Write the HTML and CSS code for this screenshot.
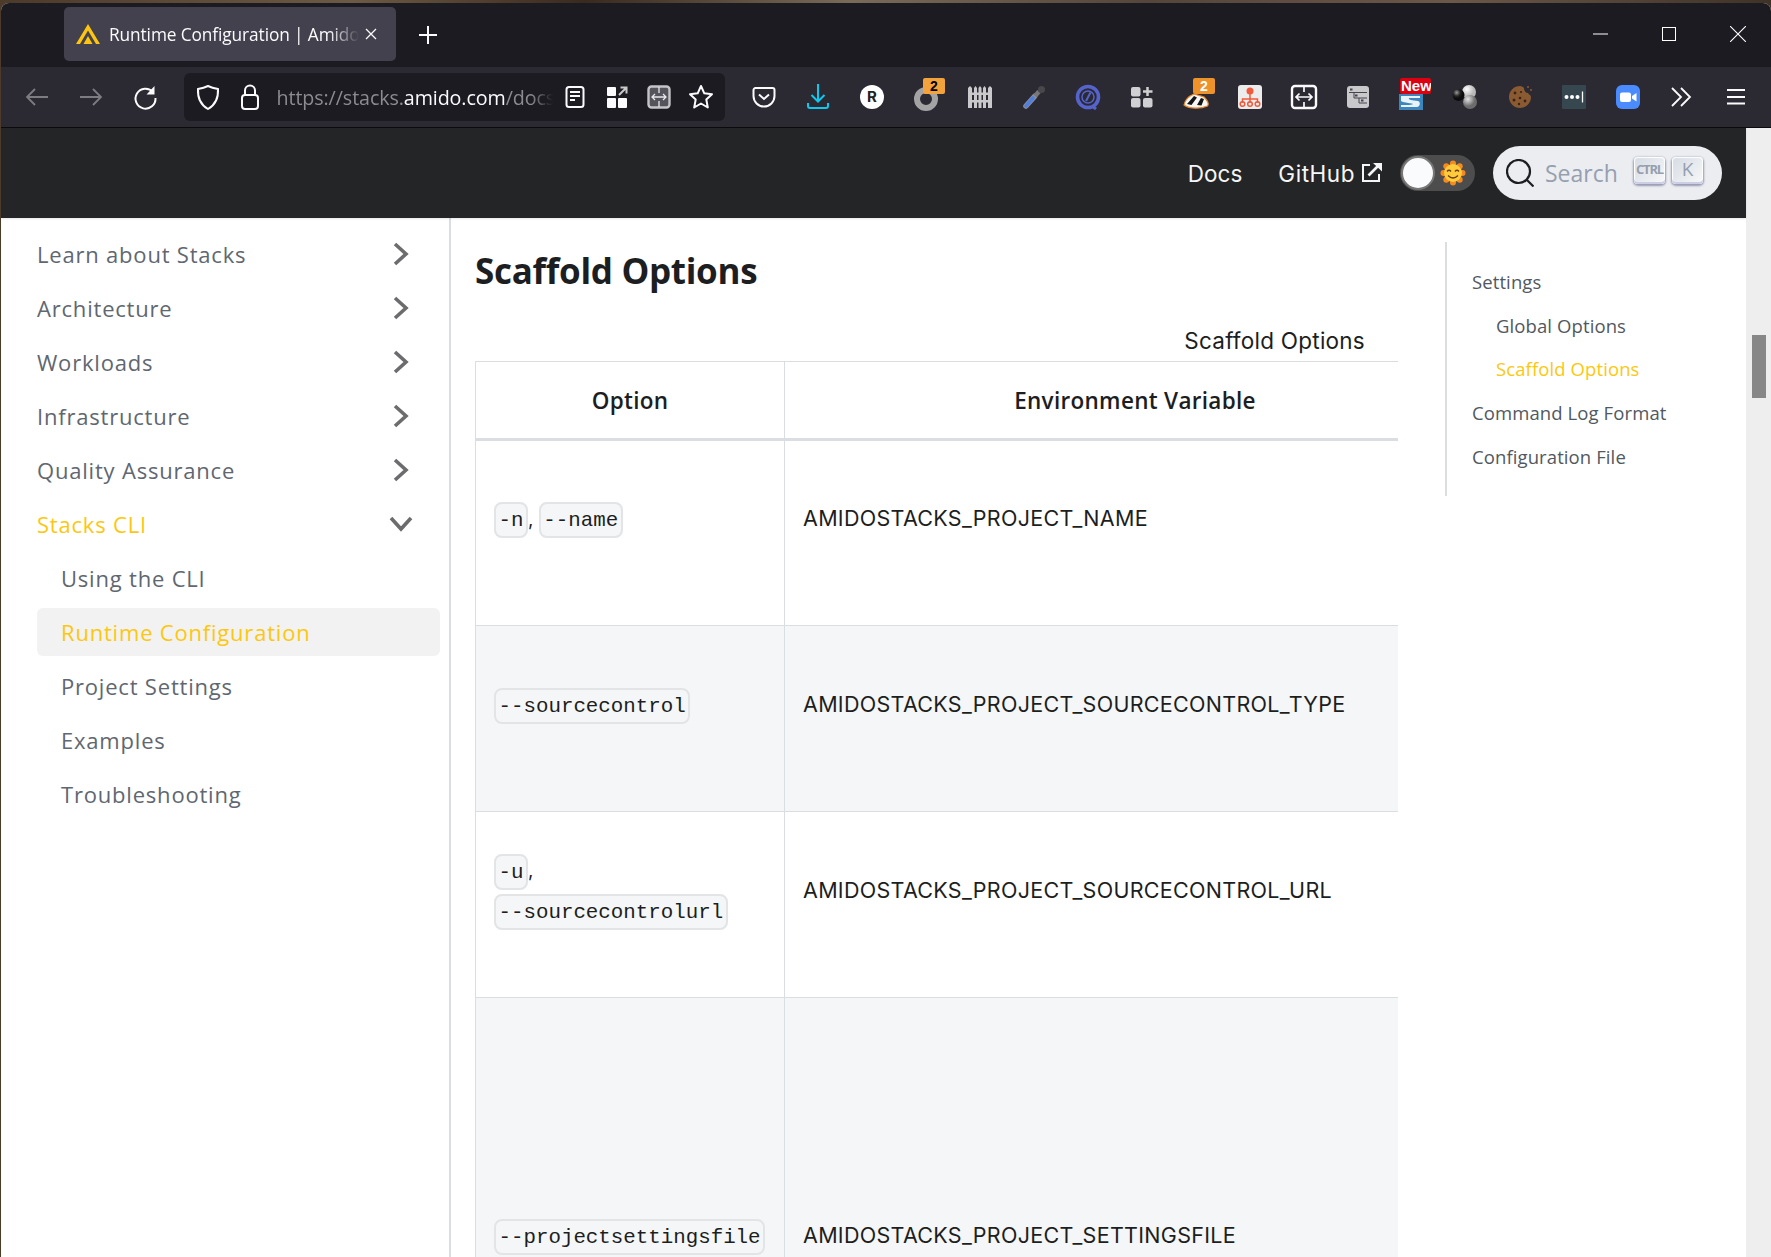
FILE: index.html
```html
<!DOCTYPE html>
<html lang="en">
<head>
<meta charset="utf-8">
<title>Runtime Configuration | Amido Stacks</title>
<link rel="stylesheet" href="styles.css">
</head>
<body>
<div class="window">
  <header class="titlebar">
    <div class="tab">
      <svg class="tab-logo" viewBox="0 0 24 20"><path d="M0 20 L12 0 L24 20 L20 20 L12 6.500 L4 20 Z" fill="#fdc50f"/><path d="M7.500 20 L12 12 L16.500 20 Z" fill="#fdc50f"/></svg>
      <span class="tab-title">Runtime Configuration | Amido</span>
      <svg class="tab-close" viewBox="0 0 12 12"><path d="M1 1 L11 11 M11 1 L1 11" stroke="#fbfbfe" stroke-width="1.300" fill="none"/></svg>
    </div>
    <svg class="new-tab" viewBox="0 0 18 18"><path d="M9 0 V18 M0 9 H18" stroke="#fbfbfe" stroke-width="2" fill="none"/></svg>
    <div class="win-controls">
      <svg class="win-min" viewBox="0 0 15 2"><path d="M0 1 H15" stroke="#fff" stroke-width="1"/></svg>
      <svg class="win-max" viewBox="0 0 14 14"><rect x=".5" y=".5" width="13" height="13" fill="none" stroke="#fff"/></svg>
      <svg class="win-close" viewBox="0 0 16 16"><path d="M0 0 L16 16 M16 0 L0 16" stroke="#fff" stroke-width="1.100" fill="none"/></svg>
    </div>
  </header>

  <div class="toolbar">
    <div class="tb-btn"><svg class="ic" viewBox="0 0 28 28"><path d="M25 14 H4 M12 6 L4 14 L12 22" fill="none" stroke="#7d7c82" stroke-width="1.800"/></svg></div>
    <div class="tb-btn"><svg class="ic" viewBox="0 0 28 28"><path d="M3 14 H24 M16 6 L24 14 L16 22" fill="none" stroke="#7d7c82" stroke-width="1.800"/></svg></div>
    <div class="tb-btn"><svg class="ic" viewBox="0 0 28 28"><path d="M22 9 A10 10 0 1 0 24.500 15" fill="none" stroke="#fbfbfe" stroke-width="2"/><path d="M23.500 3 V11.500 H15.500 Z" fill="#fbfbfe"/></svg></div>

    <div class="urlbar">
      <svg class="url-ic" viewBox="0 0 28 28"><path d="M14 3 C18 5 21 5.500 24 6 C24.500 15 21 22 14 26 C7 22 3.500 15 4 6 C7 5.500 10 5 14 3 Z" fill="none" stroke="#fbfbfe" stroke-width="2"/></svg>
      <svg class="url-ic" viewBox="0 0 28 28"><rect x="6" y="12" width="16" height="14" rx="3" fill="none" stroke="#fbfbfe" stroke-width="2"/><path d="M9 12 V7.500 A5 5 0 0 1 19 7.500 V12" fill="none" stroke="#fbfbfe" stroke-width="2"/></svg>
      <span class="url-text"><span class="url-dim">https://stacks.</span>amido.com<span class="url-dim">/docs</span></span>
      <svg class="url-ic url-end" viewBox="0 0 28 28"><rect x="5.500" y="4" width="17" height="20" rx="2.500" fill="none" stroke="#fbfbfe" stroke-width="2"/><path d="M9 9 H19 M9 13 H19 M9 17 H14" stroke="#fbfbfe" stroke-width="2" fill="none"/></svg>
      <svg class="url-ic" viewBox="0 0 28 28"><rect x="4" y="4" width="9" height="9" rx="1" fill="#fbfbfe"/><rect x="4" y="15" width="9" height="10" rx="1" fill="#fbfbfe"/><rect x="15" y="15" width="9" height="10" rx="1" fill="#fbfbfe"/><path d="M16 12 L23 5 M17.500 4.500 H23.500 V10.500" fill="none" stroke="#c9c9cc" stroke-width="2"/></svg>
      <svg class="url-ic" viewBox="0 0 28 28"><rect x="3.500" y="3.500" width="21" height="21" rx="3" fill="#55545c" stroke="#c4c4c8" stroke-width="2.400"/><path d="M14 4 V10 M14 18 V24 M7 14 H21 M10 11 L7 14 L10 17 M18 11 L21 14 L18 17" fill="none" stroke="#e8e8ea" stroke-width="1.300"/></svg>
      <svg class="url-ic" viewBox="0 0 28 28"><path d="M14 3 L17.300 10.300 L25 11.200 L19.300 16.500 L20.800 24.500 L14 20.500 L7.200 24.500 L8.700 16.500 L3 11.200 L10.700 10.300 Z" fill="none" stroke="#fbfbfe" stroke-width="2" stroke-linejoin="round"/></svg>
    </div>

    <div class="tb-btn"><svg class="ic" viewBox="0 0 28 28"><path d="M5.500 5 H22.500 A2 2 0 0 1 24.500 7 V13 A10.500 10.500 0 0 1 3.500 13 V7 A2 2 0 0 1 5.500 5 Z" fill="none" stroke="#fbfbfe" stroke-width="2"/><path d="M9 11.500 L14 16 L19 11.500" fill="none" stroke="#fbfbfe" stroke-width="2"/></svg></div>
    <div class="tb-btn"><svg class="ic" viewBox="0 0 28 28"><path d="M14 1 V18 M7.500 12 L14 18.500 L20.500 12 M4 20 V23 A2 2 0 0 0 6 25 H22 A2 2 0 0 0 24 23 V20" fill="none" stroke="#0fc8ee" stroke-width="2"/></svg></div>
    <div class="tb-btn"><span class="ic-r">R</span></div>
    <div class="tb-btn"><svg class="ic" viewBox="0 0 28 28"><circle cx="14" cy="16" r="9" fill="none" stroke="#a3a3a3" stroke-width="6"/></svg><span class="badge badge-amber">2</span></div>
    <div class="tb-btn"><svg class="ic" viewBox="0 0 28 28"><path d="M2 5 L4 3 L6 5 V25 H2 Z M8 5 L9.500 3 L11 5 V25 H8 Z M12.500 5 L14 3 L15.500 5 V25 H12.500 Z M17 5 L18.500 3 L20 5 V25 H17 Z M22 5 L24 3 L26 5 V25 H22 Z M2 9.500 H26 V12 H2 Z M2 17 H26 V19.500 H2 Z" fill="#c9c9cb"/></svg></div>
    <div class="tb-btn"><svg class="ic" viewBox="0 0 28 28"><path d="M6 23 L14.500 13.500" stroke="#8f8f95" stroke-width="5.500" stroke-linecap="round"/><path d="M6 23 L13 15" stroke="#4f7fe0" stroke-width="3.600" stroke-linecap="round"/><path d="M15 13 L19 8.500" stroke="#77777c" stroke-width="4.500"/><circle cx="21.500" cy="6.500" r="3.500" fill="#47474c"/></svg></div>
    <div class="tb-btn"><svg class="ic" viewBox="0 0 28 28"><circle cx="14" cy="14" r="10.500" fill="none" stroke="#5563cc" stroke-width="3.600"/><path d="M18 23 L22 26" stroke="#5563cc" stroke-width="3"/><circle cx="14" cy="14" r="6" fill="none" stroke="#5563cc" stroke-width="1.500"/><path d="M12 18 L16.500 9.500" stroke="#5563cc" stroke-width="2"/></svg></div>
    <div class="tb-btn"><svg class="ic" viewBox="0 0 28 28"><rect x="3" y="4" width="9.500" height="9.500" rx="2" fill="#d0d0d2"/><rect x="3" y="15" width="9.500" height="9.500" rx="2" fill="#d0d0d2"/><rect x="15" y="15" width="9.500" height="9.500" rx="2" fill="#d0d0d2"/><path d="M19.500 4 V13 M15 8.500 H24.500" stroke="#d0d0d2" stroke-width="2.500"/></svg></div>
    <div class="tb-btn"><svg class="ic" viewBox="0 0 28 28"><path d="M2 22 C3 17 7 13 12 11 L22 14 C26 18 27 21 25.500 23 C20 25.500 8 26.500 2 22 Z" fill="#f7f7f7" stroke="#e8862a" stroke-width="1.200"/><path d="M5 21 L12 13 L15 14.500 L9.500 22 Z M15 22 L19 15 L22 16 L19.500 22.500 Z" fill="#161616"/></svg><span class="badge badge-orange">2</span></div>
    <div class="tb-btn"><svg class="ic" viewBox="0 0 28 28"><rect x="2" y="2" width="24" height="24" rx="3" fill="#ececec"/><circle cx="14" cy="8" r="3.500" fill="#ef5b3c"/><path d="M14 11 V16 M6.500 20 V16 H21.500 V20 M14 16 V20" fill="none" stroke="#ef5b3c" stroke-width="1.500"/><circle cx="6.500" cy="21" r="2.300" fill="none" stroke="#ef5b3c" stroke-width="1.500"/><circle cx="14" cy="21" r="2.300" fill="none" stroke="#ef5b3c" stroke-width="1.500"/><circle cx="21.500" cy="21" r="2.300" fill="none" stroke="#ef5b3c" stroke-width="1.500"/></svg></div>
    <div class="tb-btn"><svg class="ic" viewBox="0 0 28 28"><rect x="2" y="3" width="24" height="22" rx="3" fill="none" stroke="#fbfbfe" stroke-width="2.400"/><path d="M14 3 V9 M14 19 V25 M6 14 H22 M9.500 10.500 L6 14 L9.500 17.500 M18.500 10.500 L22 14 L18.500 17.500" fill="none" stroke="#fbfbfe" stroke-width="1.700"/></svg></div>
    <div class="tb-btn"><svg class="ic" viewBox="0 0 28 28"><rect x="3" y="3" width="22" height="22" rx="3" fill="#c9c9cb"/><path d="M5 9.500 H23 M10 15 H23 M15 20 H23 M10 9.500 V15 M15 15 V20" stroke="#45454b" stroke-width="1"/><rect x="6" y="5.500" width="2.500" height="2" fill="#45454b"/><rect x="11" y="11.500" width="2.500" height="2" fill="#45454b"/><rect x="17" y="16.500" width="2.500" height="2" fill="#45454b"/></svg></div>
    <div class="tb-btn"><svg class="ic" viewBox="0 0 28 28"><rect x="1" y="11" width="24" height="16" fill="#3d86bd"/><path d="M3 13 H22 V15 H11 C10 17 14 17 20 18 C23 19 22 24 19 24 H3 V22 C9 22 15 22 15 21 C15 20 6 20 3 18 Z" fill="#e9f3fa"/></svg><span class="badge badge-new">New</span></div>
    <div class="tb-btn"><svg class="ic" viewBox="0 0 28 28"><defs><radialGradient id="ball-light" cx=".35" cy=".3"><stop offset="0" stop-color="#fff"/><stop offset="1" stop-color="#b9b9b9"/></radialGradient><radialGradient id="ball-grey" cx=".35" cy=".3"><stop offset="0" stop-color="#e4e4e4"/><stop offset="1" stop-color="#6c6c6c"/></radialGradient><radialGradient id="ball-dark" cx=".35" cy=".3"><stop offset="0" stop-color="#9a9a9a"/><stop offset=".6" stop-color="#232323"/><stop offset="1" stop-color="#0c0c0c"/></radialGradient></defs><circle cx="17" cy="9" r="7" fill="url(#ball-light)"/><circle cx="18" cy="19" r="7" fill="url(#ball-grey)"/><circle cx="6.500" cy="12" r="6" fill="url(#ball-dark)"/></svg></div>
    <div class="tb-btn"><svg class="ic" viewBox="0 0 28 28"><path d="M14 3 C16 3 17 4 18 5 C18 8 20 10 22 10 C23 12 25 12 25 14 A11 11 0 1 1 14 3 Z" fill="#8a5a33"/><g fill="#3d2412"><circle cx="9" cy="10" r="1.400"/><circle cx="15" cy="9" r="1.100"/><circle cx="8" cy="17" r="1.500"/><circle cx="14" cy="15" r="1.300"/><circle cx="19" cy="18" r="1.400"/><circle cx="13" cy="21" r="1.200"/></g><g fill="#8a5a33"><circle cx="22" cy="4" r="1"/><circle cx="25" cy="7" r="1"/></g></svg></div>
    <div class="tb-btn"><svg class="ic" viewBox="0 0 28 28"><rect x="2" y="2" width="24" height="24" rx="1" fill="#37474f"/><circle cx="6.500" cy="14" r="2" fill="#fff"/><circle cx="12" cy="14" r="2" fill="#fff"/><circle cx="17.500" cy="14" r="2" fill="#fff"/><path d="M22.500 8.500 V19.500" stroke="#fff" stroke-width="1.300"/></svg></div>
    <div class="tb-btn"><svg class="ic" viewBox="0 0 28 28"><rect x="2" y="2" width="24" height="24" rx="6" fill="#4a8cff"/><rect x="6" y="9.500" width="11" height="9.500" rx="2" fill="#fff"/><path d="M18 13 L22.500 10 V18.500 L18 15.500 Z" fill="#fff"/></svg></div>
    <div class="tb-btn"><svg class="ic" viewBox="0 0 28 28"><path d="M4 5 L13 14 L4 23 M13 5 L22 14 L13 23" fill="none" stroke="#fbfbfe" stroke-width="1.800"/></svg></div>
    <div class="tb-btn"><svg class="ic" viewBox="0 0 28 28"><path d="M5 7 H23 M5 14 H23 M5 20.500 H23" stroke="#fbfbfe" stroke-width="2"/></svg></div>
  </div>

  <div class="viewport">
    <div class="page">
      <nav class="navbar">
        <a class="nav-link">Docs</a>
        <a class="nav-link nav-github">GitHub
          <svg class="ext" viewBox="0 0 20 20"><path d="M8 3 H1 V19 H17 V12" fill="none" stroke="#f5f6f7" stroke-width="2"/><path d="M6.500 13.500 L16.500 3.500" stroke="#f5f6f7" stroke-width="2.600"/><path d="M11 1 H20 V9.500 Z" fill="#f5f6f7"/></svg>
        </a>
        <div class="toggle">
          <span class="knob"></span>
          <svg class="sun" viewBox="0 0 26 26"><g fill="#f58a1f"><circle cx="13" cy="3.500" r="3"/><circle cx="13" cy="22.500" r="3"/><circle cx="3.500" cy="13" r="3"/><circle cx="22.500" cy="13" r="3"/><circle cx="6.300" cy="6.300" r="3"/><circle cx="19.700" cy="6.300" r="3"/><circle cx="6.300" cy="19.700" r="3"/><circle cx="19.700" cy="19.700" r="3"/></g><circle cx="13" cy="13" r="9" fill="#fdcb3c"/><path d="M7 11.500 Q9 9 11 11.500 M15 11.500 Q17 9 19 11.500 M8 15.500 Q13 20.500 18 15.500" fill="none" stroke="#6b3f10" stroke-width="1.300"/></svg>
        </div>
        <div class="search">
          <svg class="search-ic" viewBox="0 0 28 28"><circle cx="12.500" cy="12.500" r="11.500" fill="none" stroke="#1c1e21" stroke-width="2.200"/><path d="M21 21 L27.500 27.500" stroke="#1c1e21" stroke-width="2.200"/></svg>
          <span class="search-text">Search</span>
          <kbd class="key key-ctrl">CTRL</kbd>
          <kbd class="key key-k">K</kbd>
        </div>
      </nav>

      <div class="docs">
        <aside class="sidebar">
          <ul class="menu">
            <li class="menu-item"><span>Learn about Stacks</span><svg class="chev" viewBox="0 0 16 24"><path d="M2 2 L13 12 L2 22" fill="none" stroke="#6c6c6e" stroke-width="3.600"/></svg></li>
            <li class="menu-item"><span>Architecture</span><svg class="chev" viewBox="0 0 16 24"><path d="M2 2 L13 12 L2 22" fill="none" stroke="#6c6c6e" stroke-width="3.600"/></svg></li>
            <li class="menu-item"><span>Workloads</span><svg class="chev" viewBox="0 0 16 24"><path d="M2 2 L13 12 L2 22" fill="none" stroke="#6c6c6e" stroke-width="3.600"/></svg></li>
            <li class="menu-item"><span>Infrastructure</span><svg class="chev" viewBox="0 0 16 24"><path d="M2 2 L13 12 L2 22" fill="none" stroke="#6c6c6e" stroke-width="3.600"/></svg></li>
            <li class="menu-item"><span>Quality Assurance</span><svg class="chev" viewBox="0 0 16 24"><path d="M2 2 L13 12 L2 22" fill="none" stroke="#6c6c6e" stroke-width="3.600"/></svg></li>
            <li class="menu-item is-open"><span>Stacks CLI</span><svg class="chev-down" viewBox="0 0 24 16"><path d="M2 2 L12 13 L22 2" fill="none" stroke="#6c6c6e" stroke-width="3.600"/></svg></li>
            <li class="menu-item sub">Using the CLI</li>
            <li class="menu-item sub is-active">Runtime Configuration</li>
            <li class="menu-item sub">Project Settings</li>
            <li class="menu-item sub">Examples</li>
            <li class="menu-item sub">Troubleshooting</li>
          </ul>
        </aside>

        <main class="main">
          <h3 class="heading">Scaffold Options</h3>
          <div class="caption">Scaffold Options</div>
          <div class="table-wrap">
            <table class="options">
              <colgroup><col class="col-option"><col class="col-env"></colgroup>
              <thead>
                <tr><th>Option</th><th>Environment Variable</th></tr>
              </thead>
              <tbody>
                <tr>
                  <td class="cell-option"><code>-n</code>, <code>--name</code></td>
                  <td class="cell-env">AMIDOSTACKS_PROJECT_NAME</td>
                </tr>
                <tr class="alt">
                  <td class="cell-option"><code>--sourcecontrol</code></td>
                  <td class="cell-env">AMIDOSTACKS_PROJECT_SOURCECONTROL_TYPE</td>
                </tr>
                <tr>
                  <td class="cell-option"><code>-u</code>,<br><code>--sourcecontrolurl</code></td>
                  <td class="cell-env">AMIDOSTACKS_PROJECT_SOURCECONTROL_URL</td>
                </tr>
                <tr class="alt tall">
                  <td class="cell-option"><code>--projectsettingsfile</code></td>
                  <td class="cell-env">AMIDOSTACKS_PROJECT_SETTINGSFILE</td>
                </tr>
              </tbody>
            </table>
          </div>
        </main>

        <aside class="toc">
          <ul class="toc-list">
            <li>Settings</li>
            <li class="toc-sub">Global Options</li>
            <li class="toc-sub toc-active">Scaffold Options</li>
            <li>Command Log Format</li>
            <li>Configuration File</li>
          </ul>
        </aside>
      </div>
    </div>
    <div class="scrollbar"><div class="thumb"></div></div>
  </div>
</div>
</body>
</html>
```

FILE: styles.css
```css
* { box-sizing: border-box; }
html, body { height: 100%; }
body {
  margin: 0;
  overflow: hidden;
  background: linear-gradient(90deg, #4c3a2a 0, #6d5a44 20%, #3a2a1e 33%, #7a6a58 48%, #55453a 65%, #6a5848 82%, #3f3227 100%);
  font-family: "Inter", "Liberation Sans", sans-serif;
}
ul { list-style: none; margin: 0; padding: 0; }

.window {
  height: 1254px;
  margin: 3px 0 0 1px;
  border-radius: 8px 8px 0 0;
  overflow: hidden;
  display: flex;
  flex-direction: column;
  background: #fff;
}

/* title bar */
.titlebar {
  flex: 0 0 64px;
  display: flex;
  align-items: flex-start;
  background: #1c1b22;
  padding: 4px 0 0 63px;
}
.tab {
  width: 332px;
  height: 54px;
  border-radius: 5px;
  background: #42414d;
  display: flex;
  align-items: center;
  padding-left: 12px;
}
.tab-logo { width: 24px; height: 20px; flex: none; }
.tab-title {
  margin-left: 9px;
  width: 250px;
  overflow: hidden;
  white-space: nowrap;
  font: 17.300px "Open Sans", sans-serif;
  letter-spacing: -.1px;
  color: #fbfbfe;
  -webkit-mask-image: linear-gradient(90deg, #000 88%, transparent 100%);
  mask-image: linear-gradient(90deg, #000 88%, transparent 100%);
}
.tab-close { width: 12px; height: 12px; margin-left: 6px; flex: none; }
.new-tab { width: 18px; height: 18px; margin: 19px 0 0 23px; flex: none; }
.win-controls {
  margin-left: auto;
  display: flex;
  align-items: center;
  height: 54px;
}
.win-min { width: 15px; height: 2px; }
.win-max { width: 14px; height: 14px; margin-left: 54px; }
.win-close { width: 16px; height: 16px; margin: 0 25px 0 54px; }

/* toolbar */
.toolbar {
  flex: 0 0 61px;
  display: flex;
  align-items: center;
  background: #2b2a33;
  border-bottom: 1px solid #0c0c0d;
  padding: 0 0 0 9px;
}
.tb-btn {
  position: relative;
  flex: 0 0 54px;
  height: 60px;
  display: flex;
  align-items: center;
  justify-content: center;
}
.ic { width: 28px; height: 28px; display: block; }
.ic-r {
  width: 24px;
  height: 24px;
  border-radius: 50%;
  background: #fff;
  color: #222;
  font: 700 15px/24px "Inter", sans-serif;
  text-align: center;
}
.badge {
  position: absolute;
  top: 11px;
  left: 24px;
  width: 22px;
  height: 16px;
  border-radius: 2px;
  text-align: center;
  font: 700 14px/16px "Liberation Sans", sans-serif;
}
.badge-amber { background: #f2a33c; color: #000; }
.badge-orange { background: #ee9329; color: #fff; }
.badge-new {
  left: 15px;
  width: 31px;
  padding-left: 1px;
  background: #dc0010;
  color: #fff;
  overflow: hidden;
  white-space: nowrap;
  text-align: left;
  font-size: 15px;
}

/* address bar */
.urlbar {
  flex: 0 0 541px;
  height: 48px;
  margin: 0 12px;
  border-radius: 6px;
  background: #1c1b22;
  display: flex;
  align-items: center;
  padding: 0 10px;
}
.url-ic { flex: none; width: 28px; height: 28px; margin-right: 14px; }
.url-ic:last-child { margin-right: 0; }
.url-text {
  flex: 0 0 282px;
  margin: 0 2.500px 0 -1.500px;
  overflow: hidden;
  white-space: nowrap;
  font: 19.700px "Open Sans", sans-serif;
  letter-spacing: -.1px;
  color: #fbfbfe;
  -webkit-mask-image: linear-gradient(90deg, #000 90%, transparent 98%);
  mask-image: linear-gradient(90deg, #000 90%, transparent 98%);
}
.url-dim { color: #8b8b90; }

/* page viewport */
.viewport { flex: 1; display: flex; min-height: 0; }
.page { flex: 1; min-width: 0; display: flex; flex-direction: column; }
.scrollbar { flex: 0 0 25px; background: #eee; padding: 207px 5px 0 6px; }
.thumb { height: 63px; background: #878787; }

/* navbar */
.navbar {
  flex: 0 0 90px;
  display: flex;
  align-items: center;
  justify-content: flex-end;
  padding-right: 24px;
  background: #242526;
  box-shadow: 0 1px 2px rgba(0, 0, 0, .1);
  position: relative;
  color: #e3e3e3;
}
.nav-link {
  font: 22.500px "Inter", sans-serif;
  color: #f5f6f7;
  display: flex;
  align-items: center;
}
.nav-github { margin-left: 36px; letter-spacing: .55px; }
.ext { width: 20px; height: 20px; margin: -3px 0 0 7px; }
.toggle {
  position: relative;
  width: 75px;
  height: 36px;
  margin-left: 18px;
  border-radius: 18px;
  background: #4d4d4d;
}
.knob {
  position: absolute;
  left: 1px;
  top: 1px;
  width: 34px;
  height: 34px;
  border-radius: 50%;
  background: #fafbfc;
  border: 2px solid #777;
}
.sun { position: absolute; left: 40px; top: 5px; width: 26px; height: 26px; }
.search {
  width: 229px;
  height: 54px;
  margin-left: 18px;
  border-radius: 27px;
  background: #ebedf0;
  display: flex;
  align-items: center;
  padding: 0 0 0 13px;
}
.search-ic { width: 28px; height: 28px; flex: none; }
.search-text { margin-left: 11px; width: 89px; font: 23px "Open Sans", sans-serif; color: #969faf; }
.key {
  flex: none;
  width: 31px;
  height: 27px;
  margin: -6px 7px 0 0;
  border-radius: 4px;
  background: linear-gradient(-225deg, #d5dbe4, #f8f8f8);
  box-shadow: inset 0 -2px 0 0 #cdcde6, inset 0 0 1px 1px #fff, 0 1px 2px 1px rgba(30, 35, 90, .4);
  color: #969faf;
  text-align: center;
  font: 700 13px/25px "Open Sans", sans-serif;
  letter-spacing: -1.200px;
}
.key-k { font: 400 19px/25px "Open Sans", sans-serif; letter-spacing: 0; }

/* docs layout */
.docs { flex: 1; min-height: 0; display: flex; background: #fff; }
.sidebar {
  flex: 0 0 450px;
  border-right: 2px solid #dadde1;
  padding: 12px 9px 0 36px;
}
.menu-item {
  height: 48px;
  margin-bottom: 6px;
  border-radius: 6px;
  display: flex;
  align-items: center;
  justify-content: space-between;
  padding: 0 31px 1px 0;
  font: 22px "Open Sans", sans-serif;
  letter-spacing: .8px;
  color: #606770;
}
.menu-item.sub { padding-left: 24px; }
.chev { width: 16px; height: 24px; flex: none; }
.chev-down { width: 24px; height: 16px; flex: none; margin-right: -4px; }
.is-open, .is-active { color: #fdc70f; }
.is-active { background: #f2f2f2; }

.main {
  flex: 0 0 947px;
  min-width: 0;
  padding-left: 24px;
  overflow: hidden;
}
.heading {
  margin: 31px 0 0;
  font: 700 35px/44px "Open Sans", sans-serif;
  color: #1c1e21;
  letter-spacing: -.3px;
}
.caption {
  margin-top: 29px;
  padding-right: 33px;
  height: 39px;
  text-align: right;
  font: 22.500px/38px "Inter", sans-serif;
  letter-spacing: .25px;
  color: #1c1e21;
}
.table-wrap { overflow: hidden; }
.options {
  width: 1010px;
  table-layout: fixed;
  border-collapse: collapse;
  color: #1c1e21;
}
.col-option { width: 309px; }
.col-env { width: 701px; }
.options th, .options td { border: 1px solid #dadde1; }
.options th {
  height: 78px;
  border-bottom: 3px solid #dadde1;
  font: 600 22.500px "Open Sans", sans-serif;
  letter-spacing: .3px;
  text-align: center;
  padding: 0;
}
.options tbody tr { height: 186px; }
.options tr.tall { height: 504px; }
.alt { background: #f5f6f7; }
.options td { vertical-align: middle; padding: 0 18px; }
.options td.cell-option {
  padding: 0 0 27px 18px;
  font-size: 19px;
  line-height: 40px;
}
.options td.cell-env {
  padding-bottom: 30px;
  font: 21.500px/36px "Inter", sans-serif;
  letter-spacing: .3px;
  white-space: nowrap;
}
code {
  font: 20.800px "Liberation Mono", monospace;
  background: #f5f6f7;
  border: 2px solid #e3e4e6;
  border-radius: 8px;
  padding: 4.500px 2.500px;
  white-space: nowrap;
}

.toc { flex: none; margin: 24px 0 0 47px; }
.toc-list {
  width: 260px;
  height: 254px;
  border-left: 2px solid #dadde1;
  padding: 18px 0 0 25px;
  font: 18.500px/43.700px "Open Sans", sans-serif;
  letter-spacing: .1px;
  color: #525860;
}
.toc-sub { padding-left: 24px; }
.toc-active { color: #fdc70f; }
```
